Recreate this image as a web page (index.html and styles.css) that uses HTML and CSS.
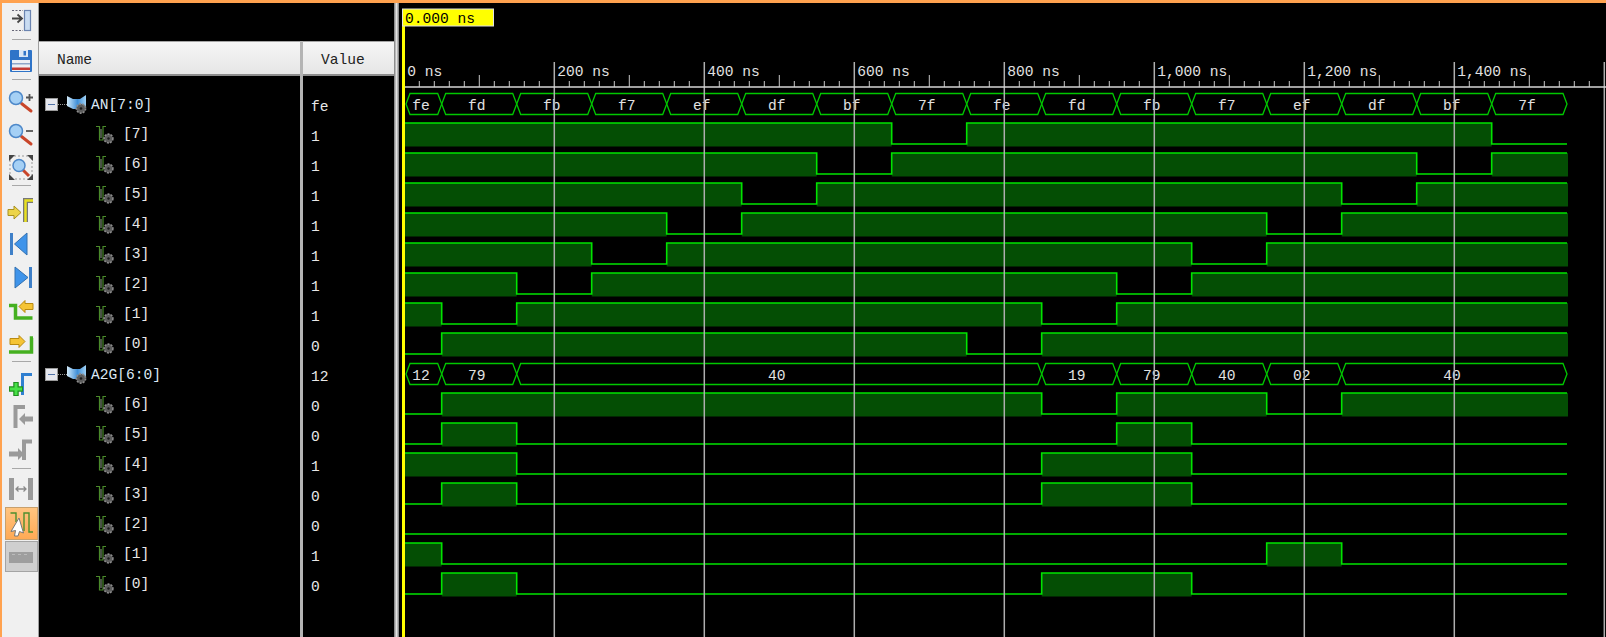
FILE: index.html
```html
<!DOCTYPE html>
<html lang="en">
<head>
    <meta charset="UTF-8">
    <title>Wave</title>
    <link rel="stylesheet" href="styles.css">
</head>
<body>
    <svg class="defs" width="0" height="0">
        <defs>
            <linearGradient id="groupFill" x1="0" y1="0" x2="1" y2="0">
                <stop offset="0" stop-color="#d4ecfb"/>
                <stop offset=".55" stop-color="#3f8fd8"/>
                <stop offset="1" stop-color="#9fd0f4"/>
            </linearGradient>
        </defs>
        <symbol id="sig" viewBox="0 0 20 20">
            <path d="M0 .5H3.5V14H7V.5H10" fill="none" stroke="#4a8a2a" stroke-width="1.2"/>
            <path d="M5 3V12" stroke="#8f9f88" stroke-width="1" fill="none"/>
            <circle cx="12.5" cy="12.5" r="4.4" fill="#5c5c5c" stroke="#8c8c8c" stroke-width="1.6" stroke-dasharray="2 1.2"/>
            <circle cx="12.5" cy="12.5" r="1.2" fill="#1a1a1a"/>
        </symbol>
        <symbol id="group" viewBox="0 0 20 20">
            <path d="M0 1L6 4H13L19 0V12L13 14H6L0 11Z" fill="url(#groupFill)"/>
            <circle cx="14" cy="13.500" r="4.600" fill="#5c5c5c" stroke="#8c8c8c" stroke-width="1.600" stroke-dasharray="2 1.200"/>
            <circle cx="14" cy="13.500" r="1.300" fill="#1a1a1a"/>
        </symbol>
        <symbol id="lens" viewBox="0 0 33 33">
            <path d="M16.5 20.5L26 28" stroke="#c8452a" stroke-width="3" stroke-linecap="round"/>
            <circle cx="11" cy="15" r="6.5" fill="#a5d0f5" stroke="#4d88c9" stroke-width="1.5"/>
        </symbol>
    </svg>

    <div class="toolbar">
        <div class="tool"><svg viewBox="0 0 33 33"><path d="M7 7.5H18M7 27.5H18" stroke="#667" stroke-dasharray="2 1.5"/><rect x="19.5" y="7.5" width="6" height="20" fill="#c9dcf2" stroke="#6b84b0" stroke-width="1.2"/><path d="M7 15.5H16M12.5 11.5L17 15.5L12.5 19.5" fill="none" stroke="#444" stroke-width="1.8"/></svg></div>
        <div class="sep"></div>
        <div class="tool"><svg viewBox="0 0 33 33"><rect x="5" y="7" width="22" height="22" rx="1" fill="#2f74c8"/><rect x="14" y="7" width="9" height="7" fill="#d8e6f5"/><rect x="18.500" y="8" width="2.500" height="4.500" fill="#2f74c8"/><rect x="7" y="17" width="18" height="11" fill="#eef0f4"/><rect x="7" y="20" width="18" height="1.500" fill="#8fa6c8"/><rect x="7" y="24.500" width="18" height="2.500" fill="#c43c36"/></svg></div>
        <div class="sep"></div>
        <div class="tool"><svg viewBox="0 0 33 33"><use href="#lens"/><path d="M21 14.500H28M24.500 11V18" stroke="#555" stroke-width="1.8"/></svg></div>
        <div class="tool"><svg viewBox="0 0 33 33"><use href="#lens"/><path d="M21 15H28" stroke="#555" stroke-width="1.8"/></svg></div>
        <div class="tool"><svg viewBox="0 0 33 33"><rect x="5" y="7" width="22" height="23" fill="none" stroke="#999" stroke-dasharray="2 2"/><path d="M4 6H10L4 12ZM28 6V12L22 6ZM4 31V25L10 31ZM28 31H22L28 25Z" fill="#444"/><path d="M18 21L24 27" stroke="#c8452a" stroke-width="3"/><circle cx="14" cy="16.500" r="6" fill="#a5d0f5" stroke="#4d88c9" stroke-width="1.500"/></svg></div>
        <div class="sep"></div>
        <div class="tool"><svg viewBox="0 0 33 33"><path d="M20.500 33V11.500H28" fill="none" stroke="#777" stroke-width="5"/><path d="M20.500 33V11.500H28" fill="none" stroke="#e8e020" stroke-width="2.500"/><path d="M3 20.500H9V17L16 23.500L9 30V26.500H3Z" fill="#ecd44a" stroke="#a89020"/></svg></div>
        <div class="tool"><svg viewBox="0 0 33 33"><rect x="5" y="11" width="3" height="22" fill="#3f80c8"/><path d="M22 11V33L9.500 22Z" fill="#3f94ea" stroke="#3270b0"/></svg></div>
        <div class="tool"><svg viewBox="0 0 33 33"><rect x="24" y="12" width="3" height="21" fill="#3f80c8"/><path d="M10 12V33L23 22.500Z" fill="#3f94ea" stroke="#3270b0"/></svg></div>
        <div class="tool"><svg viewBox="0 0 33 33"><path d="M4 17.500H10.500V30H27.500" fill="none" stroke="#45b020" stroke-width="3.500"/><path d="M14 18.500L20 12.500V15.500H28V21.500H20V24.500Z" fill="#f5c434" stroke="#b98a10"/></svg></div>
        <div class="tool"><svg viewBox="0 0 33 33"><path d="M4 31H26.500V17H28" fill="none" stroke="#45b020" stroke-width="3.500"/><path d="M20 20.500L14 14.500V17.500H5V23.500H14V26.500Z" fill="#f5c434" stroke="#b98a10"/></svg></div>
        <div class="sep sep-wide"></div>
        <div class="tool"><svg viewBox="0 0 33 33"><path d="M17.500 27V6.500H27" fill="none" stroke="#2f7fd0" stroke-width="3"/><path d="M11 14V28M4 21H18" stroke="#1f8f1f" stroke-width="5.500"/><path d="M11 15V27M5 21H17" stroke="#46e046" stroke-width="3"/></svg></div>
        <div class="tool"><svg viewBox="0 0 33 33"><path d="M10.500 27V6H20" fill="none" stroke="#9a9a9a" stroke-width="4"/><path d="M14 18L20 12V15.500H28V20.500H20V24Z" fill="#9a9a9a"/></svg></div>
        <div class="tool"><svg viewBox="0 0 33 33"><path d="M19 26V7.500H27" fill="none" stroke="#9a9a9a" stroke-width="4"/><path d="M19 20L13 14V17.500H4V22.500H13V26Z" fill="#9a9a9a"/></svg></div>
        <div class="sep sep-tight"></div>
        <div class="tool"><svg viewBox="0 0 33 33"><rect x="4" y="4" width="5" height="22" fill="#9a9a9a"/><rect x="23" y="4" width="5" height="22" fill="#9a9a9a"/><path d="M11 15H21M13.500 12.500L11 15L13.500 17.500M18.500 12.500L21 15L18.500 17.500" fill="none" stroke="#8a8a8a" stroke-width="1.300"/></svg></div>
        <div class="tool tool-on"><svg viewBox="0 0 33 33"><path d="M5.500 6H11V15M19 24V6H24V25H28" fill="none" stroke="#4f8f2e" stroke-width="1.400"/><path d="M14 11L18.500 26L14.500 24.500L13 29H9.500L10.500 23.500L6 24.500Z" fill="#fff" stroke="#777"/></svg></div>
        <div class="tool tool-off"><svg viewBox="0 0 33 33"><rect x="4" y="11" width="24" height="11" fill="#9e9e9e"/><path d="M7 13.500H25" stroke="#bbb" stroke-dasharray="3 3"/></svg></div>
    </div>

    <div class="signals">
        <div class="col name-col">
            <div class="col-head">Name</div>
            <div class="rows">
                <div class="row row-group"><span class="box"></span><span class="dots"></span><svg class="ico-group"><use href="#group"/></svg><span class="group-name">AN[7:0]</span></div>
                <div class="row row-bit"><svg class="ico-sig"><use href="#sig"/></svg><span>[7]</span></div>
                <div class="row row-bit"><svg class="ico-sig"><use href="#sig"/></svg><span>[6]</span></div>
                <div class="row row-bit"><svg class="ico-sig"><use href="#sig"/></svg><span>[5]</span></div>
                <div class="row row-bit"><svg class="ico-sig"><use href="#sig"/></svg><span>[4]</span></div>
                <div class="row row-bit"><svg class="ico-sig"><use href="#sig"/></svg><span>[3]</span></div>
                <div class="row row-bit"><svg class="ico-sig"><use href="#sig"/></svg><span>[2]</span></div>
                <div class="row row-bit"><svg class="ico-sig"><use href="#sig"/></svg><span>[1]</span></div>
                <div class="row row-bit"><svg class="ico-sig"><use href="#sig"/></svg><span>[0]</span></div>
                <div class="row row-group"><span class="box"></span><span class="dots"></span><svg class="ico-group"><use href="#group"/></svg><span class="group-name">A2G[6:0]</span></div>
                <div class="row row-bit"><svg class="ico-sig"><use href="#sig"/></svg><span>[6]</span></div>
                <div class="row row-bit"><svg class="ico-sig"><use href="#sig"/></svg><span>[5]</span></div>
                <div class="row row-bit"><svg class="ico-sig"><use href="#sig"/></svg><span>[4]</span></div>
                <div class="row row-bit"><svg class="ico-sig"><use href="#sig"/></svg><span>[3]</span></div>
                <div class="row row-bit"><svg class="ico-sig"><use href="#sig"/></svg><span>[2]</span></div>
                <div class="row row-bit"><svg class="ico-sig"><use href="#sig"/></svg><span>[1]</span></div>
                <div class="row row-bit"><svg class="ico-sig"><use href="#sig"/></svg><span>[0]</span></div>
            </div>
        </div>
        <div class="col value-col">
            <div class="col-head">Value</div>
            <div class="rows">
                <div class="row">fe</div>
                <div class="row">1</div>
                <div class="row">1</div>
                <div class="row">1</div>
                <div class="row">1</div>
                <div class="row">1</div>
                <div class="row">1</div>
                <div class="row">1</div>
                <div class="row">0</div>
                <div class="row">12</div>
                <div class="row">0</div>
                <div class="row">0</div>
                <div class="row">1</div>
                <div class="row">0</div>
                <div class="row">0</div>
                <div class="row">1</div>
                <div class="row">0</div>
            </div>
        </div>
    </div>

    <div class="splitter"></div>

    <div class="wave-pane">
        <svg id="waves" width="1207" height="634" viewBox="399 3 1207 634"></svg>
    </div>

    <script src="wave.js"></script>
</body>
</html>
```

FILE: styles.css
```css
html, body {
    height: 100%;
}
body {
    margin: 0;
    display: flex;
    height: 637px;
    overflow: hidden;
    box-sizing: border-box;
    background: #000;
    border-top: 3px solid #ffa24f;
    font-family: "Liberation Mono", monospace;
    font-size: 14.6px;
    color: #e8e8e8;
}
.defs {
    position: absolute;
}
.toolbar {
    width: 39px;
    box-sizing: border-box;
    flex: none;
    background: #f0f0f0;
    border-left: 2px solid #ffa24f;
    border-right: 1px solid #a0a0a0;
    padding-left: 3px;
}
.tool {
    width: 33px;
    height: 33px;
}
.tool svg {
    display: block;
    width: 33px;
    height: 33px;
    overflow: visible;
}
.sep {
    height: 1px;
    background: #a8a8a8;
    margin: 3px 7px 3px 7px;
}
.sep-wide {
    margin-top: 7px;
    margin-bottom: 6px;
}
.sep-tight {
    margin-top: 1px;
    margin-bottom: 5px;
}
.tool-on {
    box-sizing: border-box;
    background: linear-gradient(#ffc480, #ffaa55);
    border: 1px solid #c8a06c;
}
.tool-off {
    box-sizing: border-box;
    height: 31px;
    margin-top: 1px;
    background: #cfcfcf;
    border: 1px solid #a4a4a4;
}
.tool-on svg, .tool-off svg {
    margin: -1px;
}
.signals {
    display: flex;
    flex: none;
    width: 355px;
    padding-top: 38px;
}
.col {
    display: flex;
    flex-direction: column;
}
.name-col {
    width: 261px;
}
.value-col {
    width: 94px;
    box-sizing: border-box;
    border-left: 3px solid #b4b4b4;
}
.col-head {
    height: 35px;
    box-sizing: border-box;
    padding-left: 18px;
    line-height: 37px;
    color: #222;
    background: linear-gradient(#f6f6f6, #e6e6e6);
    border-top: 1px solid #a4a4a4;
    border-bottom: 2px solid #8c8c8c;
}
.rows {
    padding-top: 13px;
}
.row {
    display: flex;
    align-items: center;
    height: 30px;
}
.value-col .row {
    padding: 5px 0 0 8px;
    box-sizing: border-box;
}
.row-group {
    padding-left: 6px;
}
.row-bit {
    padding-left: 57px;
}
.group-name {
    padding-top: 1px;
    margin-left: -1px;
    color: #dce8f4;
}
.box {
    width: 11px;
    height: 11px;
    background: #e6e8ef;
    border: 1px solid #9a9a9a;
    position: relative;
}
.box::after {
    content: "";
    position: absolute;
    left: 2px;
    right: 2px;
    top: 5px;
    height: 1px;
    background: #4f72a8;
}
.dots {
    width: 9px;
    border-top: 1px dotted #9a9a9a;
}
.ico-group {
    width: 20px;
    height: 20px;
    margin: 2px 5px 0 0;
}
.ico-sig {
    width: 20px;
    height: 20px;
    margin: 3px 7px 0 0;
}
.splitter {
    width: 5px;
    flex: none;
    background: linear-gradient(to right, #777, #e4e4e4 50%, #777);
}
.wave-pane {
    flex: 1;
}
#waves {
    display: block;
}
#waves text {
    font-family: "Liberation Mono", monospace;
    font-size: 14.6px;
    fill: #e2e2e2;
}
#waves .flag-text {
    fill: #000;
}
```

FILE: wave.js
```js
// time axis: 0 ns sits at x=404.3, 100 ns is 75px
const X0 = 404.3;
const LEFT = 405;
const RIGHT = 1567;
const SEGS = 16;

function edge(k) {
    if (k <= 0) return LEFT;
    if (k >= SEGS) return RIGHT;
    return 441.7 + 75 * (k - 1);
}

const anVals = ['fe', 'fd', 'fb', 'f7', 'ef', 'df', 'bf', '7f'];
const AN = [];
for (let i = 0; i < SEGS; i++) AN.push(anVals[i % 8]);
const A2G = ['12', '79', '40', '40', '40', '40', '40', '40', '40', '19', '79', '40', '02', '40', '40', '40'];

let out = '';

function drawBus(vals, c) {
    let start = 0;
    for (let k = 1; k <= SEGS; k++) {
        if (k < SEGS && vals[k] === vals[start]) continue;
        const a = edge(start) + (start === 0 ? 1 : 0);
        const b = edge(k);
        const t = c - 10.5;
        const u = c + 10.5;
        out += `<path d="M${a} ${c}L${a + 4} ${t}H${b - 4}L${b} ${c}L${b - 4} ${u}H${a + 4}Z" fill="none" stroke="#00c800" stroke-width="1.3"/>`;
        out += `<text x="${(edge(start) + b) / 2 - 2.4}" y="${c + 5.5}" text-anchor="middle">${vals[start]}</text>`;
        start = k;
    }
}

function drawBit(vals, bit, c) {
    const hi = c - 11;
    const lo = c + 10;
    const level = vals.map(v => (parseInt(v, 16) >> bit) & 1);
    let line = `M${LEFT} ${level[0] ? hi : lo}`;
    let fill = '';
    let start = 0;
    for (let k = 1; k <= SEGS; k++) {
        if (k < SEGS && level[k] === level[start]) continue;
        if (level[start]) {
            const x2 = k === SEGS ? RIGHT + 1 : edge(k);
            fill += `<rect x="${edge(start)}" y="${hi}" width="${x2 - edge(start)}" height="23.5" fill="#044e04"/>`;
        }
        line += `H${edge(k)}`;
        if (k < SEGS) line += `V${level[k] ? hi : lo}`;
        start = k;
    }
    out += fill + `<path d="${line}" fill="none" stroke="#00e400" stroke-width="1.6"/>`;
}

let row = 0;
function center() {
    return 104 + 30 * row++;
}

drawBus(AN, center());
for (let b = 7; b >= 0; b--) drawBit(AN, b, center());
drawBus(A2G, center());
for (let b = 6; b >= 0; b--) drawBit(A2G, b, center());

// ruler and grid, the 1,600 ns mark has no room for its label
let ticks = '';
let grid = '';
let labels = '';
for (let i = 0; i <= 80; i++) {
    const x = X0 + 15 * i;
    if (i % 10 === 0) {
        if (i > 0) grid += `M${x} 62V637`;
        if (i < 80) labels += `<text x="${x + 3}" y="76">${(i * 20).toLocaleString('en-US')} ns</text>`;
    } else {
        ticks += `M${x} ${i % 5 === 0 ? 75 : 81}V87`;
    }
}
out += `<path d="${grid}" stroke="#aeaeae" stroke-width="1.5"/>`;
out += `<path d="${ticks}" stroke="#c8c8c8" stroke-width="1"/>`;
out += `<path d="M405 87H1606" stroke="#d4d4d4" stroke-width="1.5"/>`;
out += labels;

// cursor with its time flag
out += `<rect x="402" y="9" width="3" height="628" fill="#ffff00"/>`;
out += `<rect x="402.500" y="9" width="91" height="17" fill="#ffff00" stroke="#e0e0e0"/>`;
out += `<text class="flag-text" x="405" y="23">0.000 ns</text>`;

document.getElementById('waves').innerHTML = out;
```
